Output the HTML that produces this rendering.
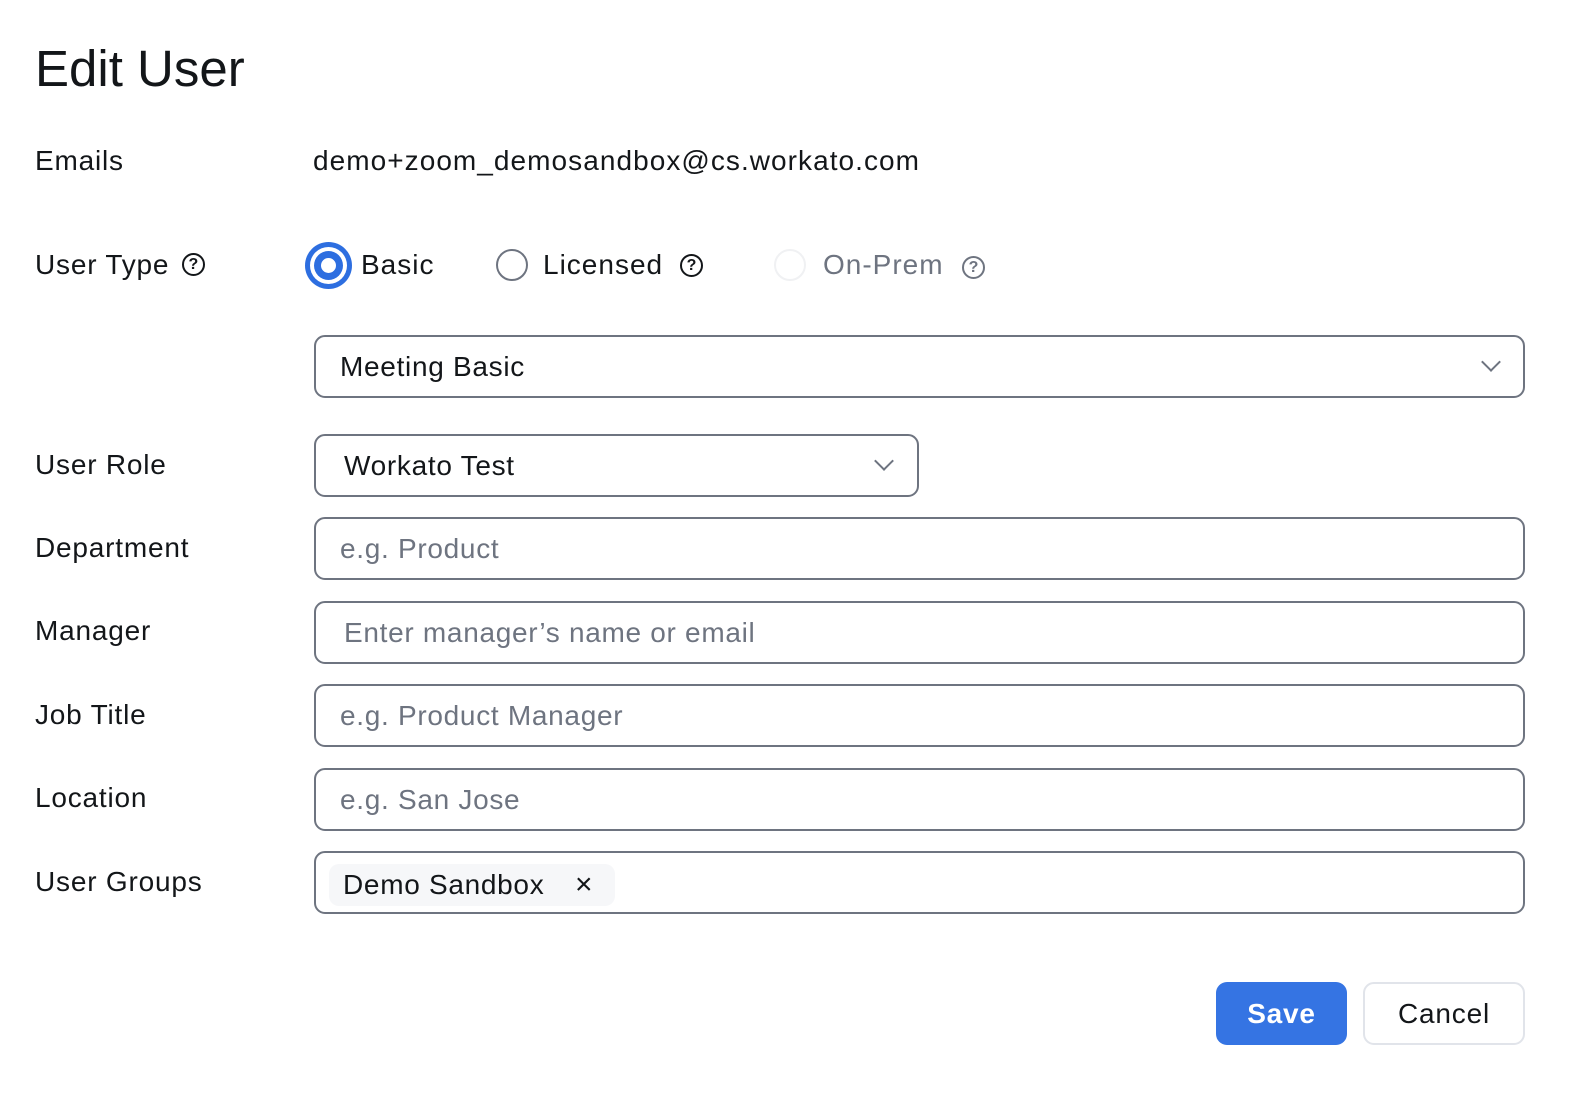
<!DOCTYPE html>
<html><head><meta charset="utf-8"><style>
*{box-sizing:border-box;margin:0;padding:0}
body{width:1578px;height:1100px;background:#fff;font-family:"Liberation Sans",sans-serif;color:#131619;position:relative;overflow:hidden}
.a{position:absolute;white-space:nowrap}
.lbl{position:absolute;left:35px;font-size:28px;line-height:32px;letter-spacing:0.8px}
.inp{position:absolute;left:314px;width:1211px;height:63px;border:2px solid #6e7480;border-radius:11px;font-size:28px;line-height:59px;padding-left:24px;letter-spacing:0.7px}
.ph{color:#6e7480}
.q{display:inline-block;width:23px;height:23px;border:2px solid #131619;border-radius:50%;font-size:16px;line-height:19px;text-align:center;font-weight:bold;vertical-align:middle;letter-spacing:0}
.chev{position:absolute;width:14px;height:14px;border-right:2.5px solid #6e7480;border-bottom:2.5px solid #6e7480;transform:rotate(45deg)}
</style></head><body>
<div class="a" style="left:35px;top:40px;font-size:51px;line-height:58px">Edit User</div>

<div class="lbl" style="top:145px">Emails</div>
<div class="a" style="left:313px;top:145px;font-size:28px;line-height:32px;letter-spacing:1.05px">demo+zoom_demosandbox@cs.workato.com</div>

<div class="lbl" style="top:249px">User Type <span class="q" style="margin-left:4px;margin-top:-4px">?</span></div>

<div class="a" style="left:305px;top:242px;width:47px;height:47px;border-radius:50%;background:#2d6ee0"></div>
<div class="a" style="left:310px;top:247px;width:37px;height:37px;border-radius:50%;background:#fff"></div>
<div class="a" style="left:314px;top:251px;width:29px;height:29px;border-radius:50%;background:#2d6ee0"></div>
<div class="a" style="left:321px;top:258px;width:15px;height:15px;border-radius:50%;background:#fff"></div>
<div class="a" style="left:361px;top:249px;font-size:28px;line-height:32px;letter-spacing:1px">Basic</div>

<div class="a" style="left:496px;top:249px;width:32px;height:32px;border-radius:50%;border:2px solid #6e7480"></div>
<div class="a" style="left:543px;top:249px;font-size:28px;line-height:32px;letter-spacing:1px">Licensed</div>
<div class="a" style="left:680px;top:254px"><span class="q">?</span></div>

<div class="a" style="left:774px;top:249px;width:32px;height:32px;border-radius:50%;border:2px solid #f0f1f3"></div>
<div class="a" style="left:823px;top:249px;font-size:28px;line-height:32px;color:#6e7480;letter-spacing:1px">On-Prem</div>
<div class="a" style="left:962px;top:256px"><span class="q" style="border-color:#6e7480;color:#6e7480">?</span></div>

<div class="inp" style="top:335px">Meeting Basic</div>
<div class="chev" style="left:1484px;top:355px"></div>

<div class="lbl" style="top:449px">User Role</div>
<div class="inp" style="top:434px;width:605px;padding-left:28px">Workato Test</div>
<div class="chev" style="left:877px;top:454px"></div>

<div class="lbl" style="top:532px">Department</div>
<div class="inp ph" style="top:517px">e.g. Product</div>

<div class="lbl" style="top:615px">Manager</div>
<div class="inp ph" style="top:601px;padding-left:28px">Enter manager’s name or email</div>

<div class="lbl" style="top:699px">Job Title</div>
<div class="inp ph" style="top:684px">e.g. Product Manager</div>

<div class="lbl" style="top:782px">Location</div>
<div class="inp ph" style="top:768px">e.g. San Jose</div>

<div class="lbl" style="top:866px">User Groups</div>
<div class="inp" style="top:851px"></div>
<div class="a" style="left:329px;top:864px;width:286px;height:42px;background:#f6f7f9;border-radius:10px;font-size:28px;line-height:42px;padding-left:14px;letter-spacing:0.7px">Demo Sandbox<span style="position:absolute;left:246px;top:0;font-size:30px">×</span></div>

<div class="a" style="left:1216px;top:982px;width:131px;height:63px;background:#3574e3;border-radius:11px;color:#fff;font-size:28px;font-weight:bold;line-height:63px;text-align:center;letter-spacing:0.8px">Save</div>
<div class="a" style="left:1363px;top:982px;width:162px;height:63px;border:2px solid #e1e4ea;border-radius:11px;font-size:28px;line-height:59px;text-align:center;letter-spacing:0.8px">Cancel</div>
</body></html>
